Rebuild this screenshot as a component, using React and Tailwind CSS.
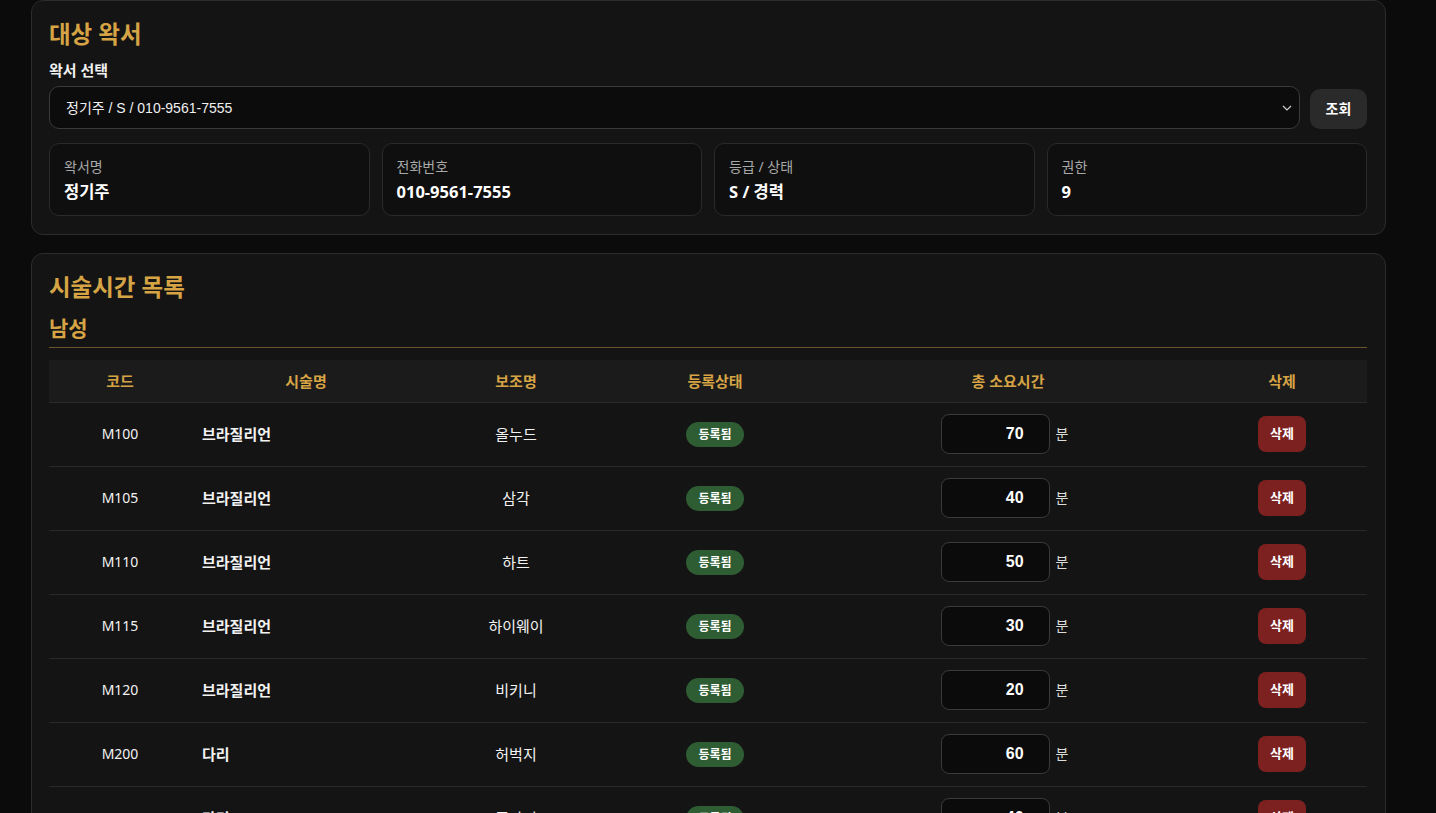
import React from "react";

const rows = [
  { code: "M100", name: "브라질리언", sub: "올누드", min: 70 },
  { code: "M105", name: "브라질리언", sub: "삼각", min: 40 },
  { code: "M110", name: "브라질리언", sub: "하트", min: 50 },
  { code: "M115", name: "브라질리언", sub: "하이웨이", min: 30 },
  { code: "M120", name: "브라질리언", sub: "비키니", min: 20 },
  { code: "M200", name: "다리", sub: "허벅지", min: 60 },
  { code: "M205", name: "다리", sub: "종아리", min: 40 },
  { code: "M210", name: "다리", sub: "전체", min: 90 },
];

const info = [
  { label: "왁서명", value: "정기주" },
  { label: "전화번호", value: "010-9561-7555" },
  { label: "등급 / 상태", value: "S / 경력" },
  { label: "권한", value: "9" },
];

const sans = "font-['Noto_Sans','Noto_Sans_CJK_KR',sans-serif]";
const arial = "font-['Liberation_Sans','Noto_Sans_CJK_KR',sans-serif]";

function App() {
  return (
    <div className={`min-h-screen bg-[#0b0b0b] pl-[31px] pr-[50px] pb-10 text-[#f2f2f2] ${sans}`}>
      {/* 대상 왁서 */}
      <section className="rounded-xl border border-[#2c2c2c] bg-[#141414] pl-[17px] pr-[18px] pt-[18px] pb-[18px]">
        <h2 className="text-[23.5px] font-bold leading-[30px] text-[#d6a445]">대상 왁서</h2>
        <label className="mt-[11px] block text-[15px] font-bold leading-5 text-[#f0f0f0]">왁서 선택</label>
        <div className="mt-[6px] flex items-end gap-[10px]">
          <div className="relative flex-1">
            <select
              defaultValue="1"
              className={`h-[43px] w-full appearance-none rounded-[10px] border border-[#3a3a3a] bg-[#0c0c0c] pl-4 pr-8 text-sm text-[#f0f0f0] outline-none ${arial}`}
            >
              <option value="1">정기주 / S / 010-9561-7555</option>
            </select>
            <svg
              className="pointer-events-none absolute right-[8px] top-1/2 -translate-y-1/2"
              width="10"
              height="6"
              viewBox="0 0 10 6"
              fill="none"
            >
              <path d="M1 1l4 4 4-4" stroke="#d0d0d0" strokeWidth="1.2" />
            </svg>
          </div>
          <button className={`h-10 w-[57px] rounded-[10px] bg-[#2a2a2a] text-sm font-bold text-white ${arial}`}>
            조회
          </button>
        </div>
        <div className="mt-[14px] grid grid-cols-4 gap-3">
          {info.map((it) => (
            <div
              key={it.label}
              className="rounded-[10px] border border-[#2a2a2a] bg-[#0f0f0f] px-[14px] pt-[14px] pb-3"
            >
              <div className="text-[14px] leading-[18px] text-[#a8a8a8]">{it.label}</div>
              <div className="mt-[5px] text-[16.5px] font-bold leading-[22px] text-white">{it.value}</div>
            </div>
          ))}
        </div>
      </section>

      {/* 시술시간 목록 */}
      <section className="mt-[18px] rounded-xl border border-[#2c2c2c] bg-[#141414] pl-[17px] pr-[18px] pt-[18px] pb-[18px]">
        <h2 className="text-[23.5px] font-bold leading-[30px] text-[#d6a445]">시술시간 목록</h2>
        <h3 className="mt-3 border-b border-[#6a5430] pb-[5px] text-[21px] font-bold leading-7 text-[#d6a445]">남성</h3>
        <table className="mt-3 w-full table-fixed border-collapse">
          <colgroup>
            <col className="w-[142px]" />
            <col className="w-[230px]" />
            <col className="w-[190px]" />
            <col className="w-[208px]" />
            <col className="w-[378px]" />
            <col />
          </colgroup>
          <thead>
            <tr className="h-[42px] bg-[#1b1b1b] text-[15px] font-bold text-[#d6a445]">
              <th className="font-bold">코드</th>
              <th className="font-bold">시술명</th>
              <th className="font-bold">보조명</th>
              <th className="font-bold">등록상태</th>
              <th className="font-bold">총 소요시간</th>
              <th className="font-bold">삭제</th>
            </tr>
          </thead>
          <tbody>
            {rows.map((r) => (
              <tr key={r.code} className="h-[64px] border-t border-[#2a2a2a]">
                <td className="text-center text-sm">{r.code}</td>
                <td className="px-[11px] text-[15px] font-bold">{r.name}</td>
                <td className="text-center text-[15px]">{r.sub}</td>
                <td className="text-center">
                  <span className="inline-flex h-[25px] items-center rounded-full bg-[#2e5d33] px-3 text-xs font-bold text-white">
                    등록됨
                  </span>
                </td>
                <td>
                  <div className="flex items-center justify-center gap-[6px] pr-[7px]">
                    <input
                      type="text"
                      defaultValue={r.min}
                      className={`h-10 w-[109px] rounded-lg border border-[#3a3a3a] bg-[#0b0b0b] pr-[25px] text-right text-base font-bold text-white outline-none ${arial}`}
                    />
                    <span className="text-sm text-[#dcdcdc]">분</span>
                  </div>
                </td>
                <td className="text-center">
                  <button className={`h-9 w-12 rounded-lg bg-[#7d2020] text-[13px] font-bold text-white ${arial}`}>
                    삭제
                  </button>
                </td>
              </tr>
            ))}
          </tbody>
        </table>
      </section>
    </div>
  );
}

export default App;
